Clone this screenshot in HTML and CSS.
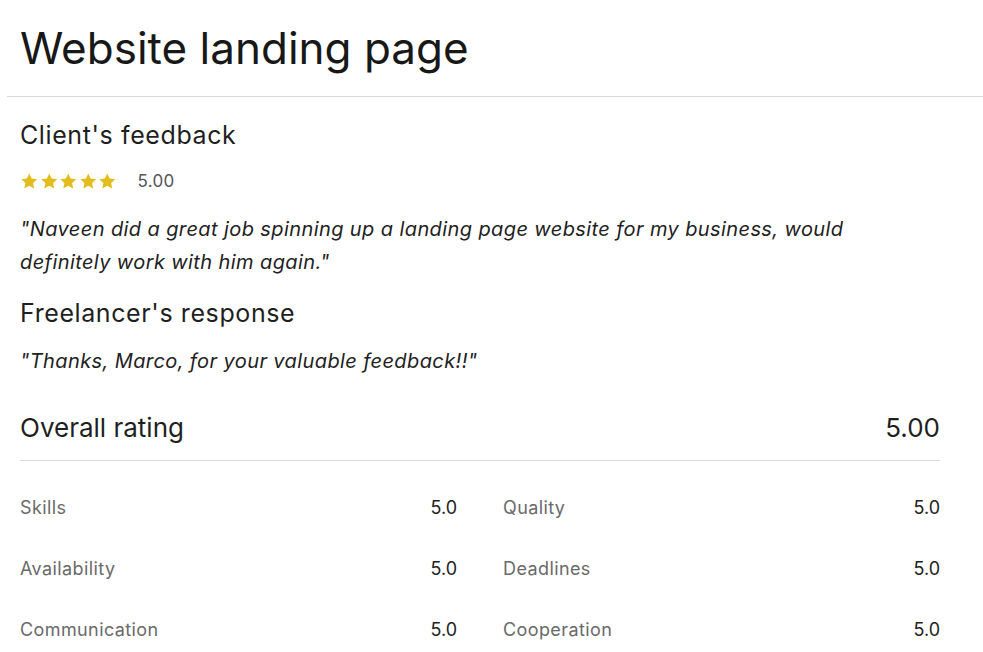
FILE: index.html
```html
<!DOCTYPE html>
<html lang="en">
<head>
<meta charset="utf-8">
<title>Website landing page</title>
<link rel="stylesheet" href="styles.css">
</head>
<body>
<header class="page-header">
  <h1 class="page-title">Website landing page</h1>
</header>
<main class="content">
  <section class="feedback">
    <h2 class="section-title">Client's feedback</h2>
    <div class="stars-row">
      <div class="stars">
        <svg class="star" viewBox="0 0 24 24"><path d="M12 1.8l3.1 6.6 7.2.9-5.3 5 1.4 7.1L12 17.9l-6.4 3.5 1.4-7.1-5.3-5 7.2-.9z"/></svg>
        <svg class="star" viewBox="0 0 24 24"><path d="M12 1.8l3.1 6.6 7.2.9-5.3 5 1.4 7.1L12 17.9l-6.4 3.5 1.4-7.1-5.3-5 7.2-.9z"/></svg>
        <svg class="star" viewBox="0 0 24 24"><path d="M12 1.8l3.1 6.6 7.2.9-5.3 5 1.4 7.1L12 17.9l-6.4 3.5 1.4-7.1-5.3-5 7.2-.9z"/></svg>
        <svg class="star" viewBox="0 0 24 24"><path d="M12 1.8l3.1 6.6 7.2.9-5.3 5 1.4 7.1L12 17.9l-6.4 3.5 1.4-7.1-5.3-5 7.2-.9z"/></svg>
        <svg class="star" viewBox="0 0 24 24"><path d="M12 1.8l3.1 6.6 7.2.9-5.3 5 1.4 7.1L12 17.9l-6.4 3.5 1.4-7.1-5.3-5 7.2-.9z"/></svg>
      </div>
      <span class="score">5.00</span>
    </div>
    <p class="quote">"Naveen did a great job spinning up a landing page website for my business, would definitely work with him again."</p>
    <h2 class="section-title">Freelancer's response</h2>
    <p class="quote response">"Thanks, Marco, for your valuable feedback!!"</p>
  </section>
  <section class="rating">
    <div class="overall">
      <span class="overall-label">Overall rating</span>
      <span class="overall-value">5.00</span>
    </div>
    <div class="grid">
      <div class="item"><span class="label">Skills</span><span class="value">5.0</span></div>
      <div class="item"><span class="label">Quality</span><span class="value">5.0</span></div>
      <div class="item"><span class="label">Availability</span><span class="value">5.0</span></div>
      <div class="item"><span class="label">Deadlines</span><span class="value">5.0</span></div>
      <div class="item"><span class="label">Communication</span><span class="value">5.0</span></div>
      <div class="item"><span class="label">Cooperation</span><span class="value">5.0</span></div>
    </div>
  </section>
</main>
</body>
</html>
```

FILE: styles.css
```css
* { box-sizing: border-box; }
html, body {
  margin: 0;
  padding: 0;
  background: #fff;
}
body {
  font-family: Inter, "Liberation Sans", sans-serif;
  color: #1f1f1f;
}
.page-header {
  margin-left: 7px;
  padding: 18px 0 18px 13px;
  border-bottom: 1px solid #d9d9d9;
}
.page-title {
  margin: 0;
  font-size: 44px;
  font-weight: 400;
  line-height: 60px;
  color: #181818;
  letter-spacing: 0;
}
.content {
  width: 940px;
  padding: 0 0 0 20px;
}
.section-title {
  margin: 0;
  font-size: 25px;
  font-weight: 400;
  line-height: 32px;
  letter-spacing: 0.6px;
  color: #1f1f1f;
}
.feedback { padding-top: 22px; }
.stars-row {
  display: flex;
  align-items: center;
  gap: 21px;
  margin-top: 18px;
  height: 24px;
}
.stars {
  display: flex;
  gap: 1px;
}
.star {
  width: 18.5px;
  height: 18.5px;
  fill: #e2bd1d;
}
.score {
  font-size: 17px;
  color: #555;
  letter-spacing: 0.3px;
}
.quote {
  margin: 20px 0 18px;
  font-size: 20px;
  line-height: 33px;
  font-style: italic;
  letter-spacing: 0.4px;
  color: #222;
  max-width: 880px;
}
.quote.response { margin: 16px 0 0; }
.rating { margin-top: 33px; }
.overall {
  display: flex;
  justify-content: space-between;
  align-items: center;
  padding-bottom: 15px;
  border-bottom: 1px solid #d9d9d9;
  font-size: 26px;
  line-height: 34px;
  color: #1f1f1f;
}
.grid {
  display: grid;
  grid-template-columns: 1fr 1fr;
  column-gap: 46px;
  row-gap: 35px;
  padding-top: 34px;
}
.item {
  display: flex;
  justify-content: space-between;
  font-size: 18px;
  line-height: 26px;
}
.label { color: #6a6a6a; letter-spacing: 0.4px; }
.value { color: #222; }
```
